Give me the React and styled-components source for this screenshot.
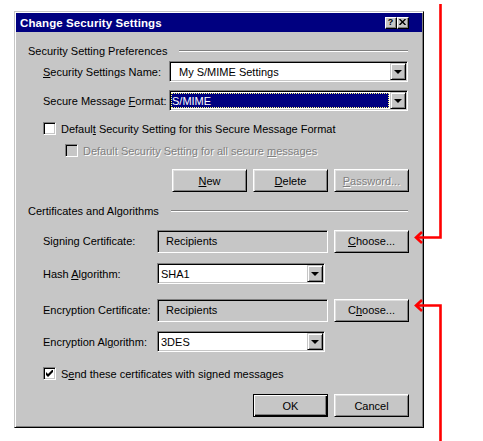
import React from 'react';
import styled, { createGlobalStyle } from 'styled-components';

const GlobalStyle = createGlobalStyle`
  html, body {
    margin: 0;
    padding: 0;
    background: #fff;
  }
  body {
    font-family: 'Liberation Sans', Arial, sans-serif;
    font-size: 11px;
    color: #000;
  }
`;

const Page = styled.div`
  position: relative;
  width: 483px;
  height: 441px;
  padding: 11px 0 0 14px;
  box-sizing: border-box;
  overflow: hidden;
`;

const Dialog = styled.div`
  width: 410px;
  height: 417px;
  box-sizing: border-box;
  background: #c6c6c6;
  border: 1px solid;
  border-color: #c6c6c6 #000 #000 #c6c6c6;
  box-shadow: inset 1px 1px #fff, inset -1px -1px #808080;
  padding: 1px;
  display: flex;
  flex-direction: column;
`;

const TitleBar = styled.div`
  height: 19px;
  flex-shrink: 0;
  background: #000080;
  display: flex;
  align-items: center;
  padding: 0 13px 0 4px;
`;

const Title = styled.div`
  flex: 1;
  color: #fff;
  font-weight: bold;
  font-size: 11.5px;
  letter-spacing: 0.1px;
`;

const CaptionButton = styled.div`
  width: 12px;
  height: 12px;
  box-sizing: border-box;
  background: #c6c6c6;
  border: 1px solid;
  border-color: #fff #000 #000 #fff;
  box-shadow: inset -1px -1px #808080;
  display: flex;
  align-items: center;
  justify-content: center;
  font-weight: bold;
  font-size: 9px;
  line-height: 1;
  padding: 0 1px 1px 0;
`;

const Body = styled.div`
  flex: 1;
  display: flex;
  flex-direction: column;
  padding: 0 14px 0 12px;
`;

const GroupHeader = styled.div`
  display: flex;
  align-items: center;
  height: 14px;
  margin-top: ${p => p.$mt}px;
`;

const GroupLine = styled.div`
  flex: 1;
  margin-left: ${p => p.$gap}px;
  border-top: 1px solid #808080;
  border-bottom: 1px solid #fff;
`;

const Row = styled.div`
  display: flex;
  align-items: center;
  height: ${p => p.$h}px;
  margin-top: ${p => p.$mt}px;
  padding-left: ${p => p.$indent || 15}px;
`;

const Label = styled.div`
  width: ${p => p.$w}px;
  flex-shrink: 0;
  white-space: nowrap;
`;

const Sunken = styled.div`
  height: ${p => p.$h}px;
  width: ${p => (p.$w ? `${p.$w}px` : 'auto')};
  flex: ${p => (p.$w ? '0 0 auto' : '1')};
  box-sizing: border-box;
  border: 1px solid;
  border-color: #808080 #fff #fff #808080;
  box-shadow: inset 1px 1px #000, inset -1px -1px #c6c6c6;
  background: ${p => (p.$grey ? '#c6c6c6' : '#fff')};
  padding: 1px;
  display: flex;
`;

const ComboText = styled.div`
  flex: 1;
  display: flex;
  align-items: center;
  padding-left: ${p => p.$pad}px;
  white-space: nowrap;
`;

const Highlight = styled.div`
  flex: 1;
  margin: 1px 1px 1px 0;
  background: #000080;
  color: #fff;
  outline: 1px dotted #ffff80;
  outline-offset: -1px;
  display: flex;
  align-items: center;
  padding-left: 1px;
`;

const DropButton = styled.div`
  width: 16px;
  height: 17px;
  box-sizing: border-box;
  background: #c6c6c6;
  border: 1px solid;
  border-color: #c6c6c6 #000 #000 #c6c6c6;
  box-shadow: inset 1px 1px #fff, inset -1px -1px #808080;
  display: flex;
  align-items: center;
  justify-content: center;
`;

const Arrow = styled.div`
  width: 0;
  height: 0;
  border-left: 4px solid transparent;
  border-right: 4px solid transparent;
  border-top: 4px solid #000;
  margin-top: 1px;
`;

const Button = styled.div`
  width: 75px;
  height: 23px;
  flex-shrink: 0;
  box-sizing: border-box;
  margin-left: ${p => p.$ml || 0}px;
  background: #c6c6c6;
  border: 1px solid;
  border-color: ${p => (p.$default ? '#000' : '#fff #000 #000 #fff')};
  box-shadow: ${p =>
    p.$default
      ? 'inset 1px 1px #fff, inset -1px -1px #000, inset -2px -2px #808080'
      : 'inset 1px 1px #dfdfdf, inset -1px -1px #808080'};
  display: flex;
  align-items: center;
  justify-content: center;
  color: ${p => (p.$disabled ? '#808080' : '#000')};
  text-shadow: ${p => (p.$disabled ? '1px 1px 0 #fff' : 'none')};
`;

const ButtonRow = styled.div`
  display: flex;
  justify-content: flex-end;
  gap: 6px;
  height: 23px;
  margin-top: ${p => p.$mt}px;
  margin-right: -1px;
`;

const CheckBox = styled.div`
  width: 13px;
  height: 13px;
  box-sizing: border-box;
  flex-shrink: 0;
  border: 1px solid;
  border-color: #808080 #fff #fff #808080;
  box-shadow: inset 1px 1px #000, inset -1px -1px #c6c6c6;
  background: ${p => (p.$disabled ? '#c6c6c6' : '#fff')};
  display: flex;
  align-items: center;
  justify-content: center;
`;

const CheckText = styled.div`
  margin-left: 5px;
  white-space: nowrap;
  color: ${p => (p.$disabled ? '#808080' : '#000')};
  text-shadow: ${p => (p.$disabled ? '1px 1px 0 #fff' : 'none')};
`;

const Annotation = styled.svg`
  position: absolute;
  left: 0;
  top: 0;
  width: 483px;
  height: 441px;
  pointer-events: none;
`;

const Combo = ({ w, pad = 2, selected, children }) => (
  <Sunken $h={21} $w={w}>
    {selected ? (
      <Highlight>{children}</Highlight>
    ) : (
      <ComboText $pad={pad}>{children}</ComboText>
    )}
    <DropButton>
      <Arrow />
    </DropButton>
  </Sunken>
);

const Check = ({ checked, disabled, indent, mt, children }) => (
  <Row $h={15} $mt={mt} $indent={indent}>
    <CheckBox $disabled={disabled}>
      {checked && (
        <svg width="7" height="7" viewBox="0 0 7 7">
          <path d="M0 2 L2 4 L7 -1 L7 2 L2 7 L0 5 Z" fill="#000" />
        </svg>
      )}
    </CheckBox>
    <CheckText $disabled={disabled}>{children}</CheckText>
  </Row>
);

export default function App() {
  return (
    <Page>
      <GlobalStyle />
      <Dialog>
        <TitleBar>
          <Title>Change Security Settings</Title>
          <CaptionButton>?</CaptionButton>
          <CaptionButton>
            <svg width="7" height="6" viewBox="0 0 7 6">
              <path d="M0.5 0 L6.5 6 M6.5 0 L0.5 6" stroke="#000" strokeWidth="1.4" />
            </svg>
          </CaptionButton>
        </TitleBar>
        <Body>
          <GroupHeader $mt={12}>
            Security Setting Preferences
            <GroupLine $gap={12} />
          </GroupHeader>
          <Row $h={21} $mt={3}>
            <Label $w={126}>
              <u>S</u>ecurity Settings Name:
            </Label>
            <Combo pad={8}>My S/MIME Settings</Combo>
          </Row>
          <Row $h={21} $mt={8}>
            <Label $w={126}>
              Secure Message <u>F</u>ormat:
            </Label>
            <Combo selected>S/MIME</Combo>
          </Row>
          <Check mt={10}>
            Defaul<u>t</u> Security Setting for this Secure Message Format
          </Check>
          <Check mt={7} indent={37} disabled>
            Default Security Setting for all secure <u>m</u>essages
          </Check>
          <ButtonRow $mt={11}>
            <Button>
              <span><u>N</u>ew</span>
            </Button>
            <Button>
              <span><u>D</u>elete</span>
            </Button>
            <Button $disabled>
              <span><u>P</u>assword...</span>
            </Button>
          </ButtonRow>
          <GroupHeader $mt={12}>
            Certificates and Algorithms
            <GroupLine $gap={12} />
          </GroupHeader>
          <Row $h={24} $mt={11}>
            <Label $w={114}>Signing Certificate:</Label>
            <Sunken $h={23} $w={171} $grey>
              <ComboText $pad={7}>Recipients</ComboText>
            </Sunken>
            <Button $ml={6}>
              <span><u>C</u>hoose...</span>
            </Button>
          </Row>
          <Row $h={21} $mt={10}>
            <Label $w={114}>
              Hash <u>A</u>lgorithm:
            </Label>
            <Combo w={168}>SHA1</Combo>
          </Row>
          <Row $h={24} $mt={14}>
            <Label $w={114}>Encryption Certificate:</Label>
            <Sunken $h={23} $w={171} $grey>
              <ComboText $pad={7}>Recipients</ComboText>
            </Sunken>
            <Button $ml={6}>
              <span>C<u>h</u>oose...</span>
            </Button>
          </Row>
          <Row $h={21} $mt={9}>
            <Label $w={114}>
              Encryption Al<u>g</u>orithm:
            </Label>
            <Combo w={168}>3DES</Combo>
          </Row>
          <Check mt={14} checked>
            S<u>e</u>nd these certificates with signed messages
          </Check>
          <ButtonRow $mt={13}>
            <Button $default>OK</Button>
            <Button>Cancel</Button>
          </ButtonRow>
        </Body>
      </Dialog>
      <Annotation viewBox="0 0 483 441">
        <g stroke="#ff0000" strokeWidth="2.6" fill="none">
          <path d="M440.5 4 V237.5 H416" />
          <path d="M422 232 L416 237.5 L422 243" />
          <path d="M416 305.5 H440.5 V441" />
          <path d="M422 300 L416 305.5 L422 311" />
        </g>
      </Annotation>
    </Page>
  );
}
